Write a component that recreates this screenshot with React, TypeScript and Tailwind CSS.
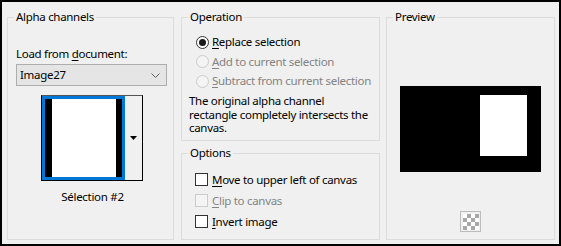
import React from "react";

function U({ children }: { children: React.ReactNode }) {
  return <span className="underline decoration-1 underline-offset-[2px]">{children}</span>;
}

function Radio({ checked, disabled, children, h }: { checked?: boolean; disabled?: boolean; children: React.ReactNode; h: string }) {
  return (
    <div className={`flex items-center ${h}`}>
      <div
        className={`w-[13px] h-[13px] rounded-full border flex items-center justify-center ${
          disabled ? "border-[#cccccc] bg-[#f4f4f4]" : "border-[#333333] bg-white"
        }`}
      >
        {checked && <div className="w-[7px] h-[7px] rounded-full bg-[#1a1a1a]" />}
      </div>
      <span className={`ml-[3px] whitespace-nowrap ${disabled ? "text-[#838383]" : "text-black"}`}>{children}</span>
    </div>
  );
}

function Check({ disabled, children }: { disabled?: boolean; children: React.ReactNode }) {
  return (
    <div className="flex items-center h-[21px]">
      <div className={`w-[13px] h-[13px] border ${disabled ? "border-[#cccccc] bg-[#f4f4f4]" : "border-[#333333] bg-white"}`} />
      <span className={`ml-[4px] whitespace-nowrap ${disabled ? "text-[#838383]" : "text-black"}`}>{children}</span>
    </div>
  );
}

function Legend({ children }: { children: React.ReactNode }) {
  return <legend className="ml-[6px] px-[2px] leading-[16px] text-black">{children}</legend>;
}

export default function App() {
  const cells = Array.from({ length: 16 }, (_, i) => {
    const r = Math.floor(i / 4);
    const c = i % 4;
    return (r + c) % 2 === 0;
  });
  return (
    <div className="w-[561px] h-[246px] box-border border-2 border-black bg-[#f0f0f0] flex pl-[5px] pr-[4px] pt-[7px] pb-[4px] text-[11.5px] tracking-[-0.3px] leading-[16px] text-black font-['Noto_Sans',sans-serif]">
      {/* Alpha channels */}
      <fieldset className="w-[167px] h-full border border-[#dcdcdc] m-0 p-0 min-w-0 flex flex-col">
        <Legend>Alpha channels</Legend>
        <div className="pl-[8px] pr-[5px] flex flex-col">
          <div className="mt-[21px] h-[16px] whitespace-nowrap">
            Load from <U>d</U>ocument:
          </div>
          <div className="mt-[2px] h-[22px] w-[151px] border border-[#adadad] bg-[#e5e5e5] flex items-center pl-[3px] pr-[6px]">
            <span className="flex-1">Image27</span>
            <svg width="9" height="5" viewBox="0 0 9 5">
              <path d="M0.5 0.5 L4.5 4.5 L8.5 0.5" fill="none" stroke="#606060" strokeWidth="1" />
            </svg>
          </div>
          <div className="mt-[9px] mx-auto w-[102px] h-[86px] border border-black border-t-[#555555] flex">
            <div className="w-[83px] h-full border-[3px] border-[#0078d7] flex bg-white">
              <div className="w-[7px] bg-black" />
              <div className="flex-1 bg-white" />
              <div className="w-[6px] bg-black" />
            </div>
            <div className="flex-1 flex items-center justify-center">
              <svg width="7" height="4" viewBox="0 0 7 4">
                <polygon points="0,0 7,0 3.5,4" fill="#000" />
              </svg>
            </div>
          </div>
          <div className="mt-[8px] h-[16px] text-center pl-[1px]">Sélection #2</div>
        </div>
      </fieldset>

      {/* Operation + Options */}
      <div className="ml-[7px] w-[199px] h-full flex flex-col">
        <fieldset className="h-[132px] border border-[#dcdcdc] m-0 p-0 min-w-0">
          <Legend>Operation</Legend>
          <div className="pl-[14px] mt-[7px] flex flex-col">
            <Radio checked h="h-[20px]">
              <U>R</U>eplace selection
            </Radio>
            <Radio disabled h="h-[19px]">
              <U>A</U>dd to current selection
            </Radio>
            <Radio disabled h="h-[20px]">
              <U>S</U>ubtract from current selection
            </Radio>
          </div>
          <div className="pl-[7px] mt-[3px] leading-[13.5px] whitespace-nowrap">
            The original alpha channel
            <br />
            rectangle completely intersects the
            <br />
            canvas.
          </div>
        </fieldset>
        <fieldset className="mt-[4px] flex-1 border border-[#dcdcdc] m-0 p-0 min-w-0">
          <Legend>Options</Legend>
          <div className="pl-[13px] mt-[8px] flex flex-col">
            <Check>
              <U>M</U>ove to upper left of canvas
            </Check>
            <Check disabled>
              <U>C</U>lip to canvas
            </Check>
            <Check>
              <U>I</U>nvert image
            </Check>
          </div>
        </fieldset>
      </div>

      {/* Preview */}
      <fieldset className="ml-[6px] w-[169px] h-full border border-[#dcdcdc] m-0 p-0 min-w-0 flex flex-col">
        <Legend>Preview</Legend>
        <div className="flex flex-col items-center">
          <div className="mt-[61px] w-[141px] h-[86px] bg-black pl-[80px] pt-[9px]">
            <div className="w-[47px] h-[61px] bg-white" />
          </div>
          <div className="mt-[39px] w-[21px] h-[21px] border border-[#bcbcbc] flex items-center justify-center">
            <div className="grid grid-cols-4 w-[16px] h-[16px]">
              {cells.map((w, i) => (
                <div key={i} className={w ? "bg-white" : "bg-[#a8a8a8]"} />
              ))}
            </div>
          </div>
        </div>
      </fieldset>
    </div>
  );
}
